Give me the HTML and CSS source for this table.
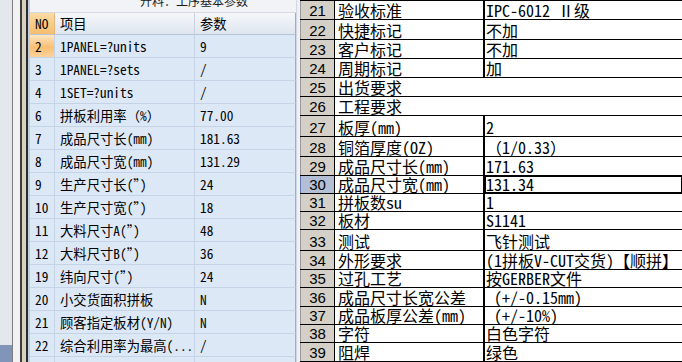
FILE: index.html
```html
<!DOCTYPE html>
<html>
<head>
<meta charset="utf-8">
<link rel="stylesheet" href="styles.css">
</head>
<body>
<div class="screen">
  <div class="edge">
    <div class="edge-bg"><div class="edge-blue"></div></div>
    <div class="e1"></div>
    <div class="e2"></div>
    <div class="e3"></div>
    <div class="e4"></div>
    <div class="e5"></div>
    <div class="e6"></div>
  </div>

  <div class="dialog">
    <div class="title"><span class="title-text">开料：工序基本参数</span></div>
    <div class="ptable">
      <div class="c no hd no-hd">NO</div><div class="c hd">项目</div><div class="c hd last">参数</div>
      <div class="c no no-sel">2</div><div class="c">1PANEL=?units</div><div class="c last">9</div>
      <div class="c no">3</div><div class="c">1PANEL=?sets</div><div class="c last">/</div>
      <div class="c no">4</div><div class="c">1SET=?units</div><div class="c last">/</div>
      <div class="c no">6</div><div class="c">拼板利用率（%）</div><div class="c last">77.00</div>
      <div class="c no">7</div><div class="c">成品尺寸长(mm)</div><div class="c last">181.63</div>
      <div class="c no">8</div><div class="c">成品尺寸宽(mm)</div><div class="c last">131.29</div>
      <div class="c no">9</div><div class="c">生产尺寸长(”)</div><div class="c last">24</div>
      <div class="c no">10</div><div class="c">生产尺寸宽(”)</div><div class="c last">18</div>
      <div class="c no">11</div><div class="c">大料尺寸A(”)</div><div class="c last">48</div>
      <div class="c no">12</div><div class="c">大料尺寸B(”)</div><div class="c last">36</div>
      <div class="c no">19</div><div class="c">纬向尺寸(”)</div><div class="c last">24</div>
      <div class="c no">20</div><div class="c">小交货面积拼板</div><div class="c last">N</div>
      <div class="c no">21</div><div class="c">顾客指定板材(Y/N)</div><div class="c last">N</div>
      <div class="c no">22</div><div class="c">综合利用率为最高(...</div><div class="c last">/</div>
      <div class="c no"></div><div class="c"></div><div class="c last"></div>
    </div>
  </div>

  <div class="gap"></div>

  <div class="sheet">
    <div class="top-line"></div>
    <div class="row h19"><div class="rh">21</div><div class="lb">验收标准</div><div class="vl">IPC-6012 Ⅱ级</div></div>
    <div class="row h20"><div class="rh">22</div><div class="lb">快捷标记</div><div class="vl">不加</div></div>
    <div class="row h19"><div class="rh">23</div><div class="lb">客户标记</div><div class="vl">不加</div></div>
    <div class="row h19"><div class="rh">24</div><div class="lb">周期标记</div><div class="vl">加</div></div>
    <div class="row h19"><div class="rh">25</div><div class="lb merged">出货要求</div></div>
    <div class="row h19"><div class="rh">26</div><div class="lb merged">工程要求</div></div>
    <div class="row h21"><div class="rh">27</div><div class="lb">板厚(mm)</div><div class="vl">2</div></div>
    <div class="row h20"><div class="rh">28</div><div class="lb">铜箔厚度(OZ)</div><div class="vl">（1/0.33）</div></div>
    <div class="row h19"><div class="rh">29</div><div class="lb">成品尺寸长(mm)</div><div class="vl">171.63</div></div>
    <div class="row h18"><div class="rh sel">30</div><div class="lb">成品尺寸宽(mm)</div><div class="vl active">131.34</div></div>
    <div class="row h18"><div class="rh">31</div><div class="lb">拼板数su</div><div class="vl">1</div></div>
    <div class="row h18"><div class="rh">32</div><div class="lb">板材</div><div class="vl">S1141</div></div>
    <div class="row h21"><div class="rh">33</div><div class="lb">测试</div><div class="vl">飞针测试</div></div>
    <div class="row h19"><div class="rh">34</div><div class="lb">外形要求</div><div class="vl">(1拼板V-CUT交货)【顺拼】</div></div>
    <div class="row h18"><div class="rh">35</div><div class="lb">过孔工艺</div><div class="vl">按GERBER文件</div></div>
    <div class="row h19"><div class="rh">36</div><div class="lb">成品尺寸长宽公差</div><div class="vl"> (+/-0.15mm)</div></div>
    <div class="row h18"><div class="rh">37</div><div class="lb">成品板厚公差(mm)</div><div class="vl"> (+/-10%)</div></div>
    <div class="row h18"><div class="rh">38</div><div class="lb">字符</div><div class="vl">白色字符</div></div>
    <div class="row h19"><div class="rh">39</div><div class="lb">阻焊</div><div class="vl">绿色</div></div>
  </div>
</div>
</body>
</html>
```

FILE: styles.css
```css
* { box-sizing: border-box; }
html, body { margin: 0; padding: 0; }
body {
  width: 682px;
  height: 362px;
  overflow: hidden;
  background: #ffffff;
  font-family: "Noto Sans Mono CJK SC", "Noto Sans CJK SC", sans-serif;
  color: #000;
}
.screen {
  display: flex;
  width: 682px;
  height: 362px;
  overflow: hidden;
}

/* left window edges */
.edge { display: flex; width: 30px; height: 362px; flex: none; }
.edge-bg {
  width: 12px;
  background: #e4e7eb;
  display: flex;
  flex-direction: column;
  justify-content: flex-end;
}
.edge-blue { height: 17px; background: #8195b8; }
.e1 { width: 1px; background: #7e7e7e; }
.e2 { width: 7px; background: #f2f2f2; }
.e3 { width: 2px; background: #3b3b3b; }
.e4 { width: 4px; background: #d8d1bd; }
.e5 { width: 2px; background: #2c2c2c; }
.e6 { width: 2px; background: #c3cfdf; }

/* dialog */
.dialog {
  width: 266px;
  flex: none;
  height: 362px;
  display: flex;
  flex-direction: column;
  overflow: hidden;
}
.title {
  flex: none;
  height: 13px;
  background: #f1f3f6;
  border-bottom: 1px solid #d3dae4;
  overflow: hidden;
  padding-left: 110px;
  font-size: 12px;
  line-height: 12px;
}
.title-text { display: block; margin-top: -5px; color: #1a1a1a; }

.ptable {
  flex: none;
  display: grid;
  grid-template-columns: 25px 140px 101px;
  grid-auto-rows: 23px;
  grid-template-rows: 22px;
  background: #dde8f7;
  font-size: 13.33px;
}
.c {
  display: flex;
  align-items: center;
  padding-left: 5px;
  border-bottom: 1px solid #c5d3e6;
  border-right: 1px solid #c5d3e6;
  white-space: nowrap;
  overflow: hidden;
}
.c.last { border-right: 1px solid #9fadc1; }
.hd {
  background: linear-gradient(#f5f7fa, #dfe6ef);
  border-bottom: 1px solid #b6c4d7;
  border-right-color: #c9d2de;
}
.no-hd {
  background: linear-gradient(#fbdca6, #f6bd6d);
  border-right-color: #e2b67b;
}
.no-sel {
  background: linear-gradient(#fde6c3 0%, #f9bf73 55%, #fbd39c 100%);
}

.gap { width: 4px; flex: none; background: #eef1f5; border-left: 1px solid #d0d7e0; }

/* excel sheet */
.sheet {
  width: 382px;
  flex: none;
  display: flex;
  flex-direction: column;
  background: #fff;
}
.top-line { height: 1px; background: #000; flex: none; }
.row {
  display: grid;
  grid-template-columns: 35px 150px 197px;
  flex: none;
  border-bottom: 1px solid #000;
  font-size: 16px;
}
.h18 { height: 18px; }
.h19 { height: 19px; }
.h20 { height: 20px; }
.h21 { height: 21px; }
.rh {
  background: #d4d0c8;
  border-right: 1px solid #000;
  border-left: 1px solid #9a9a9a;
  font-family: "Liberation Sans", Arial, sans-serif;
  font-size: 15px;
  display: flex;
  align-items: flex-end;
  justify-content: center;
  line-height: 17px;
  color: #000;
}
.rh.sel { background: #b4bed4; border-left-color: #5f78b0; }
.lb, .vl {
  display: flex;
  align-items: flex-end;
  line-height: 17px;
  padding-left: 3px;
  white-space: pre;
  overflow: hidden;
}
.lb { border-right: 2px solid #000; }
.lb.merged { border-right: none; grid-column: 2 / 4; }
.vl { padding-left: 1px; }
.vl.active { box-shadow: inset 0 0 0 1px #000; }
```
